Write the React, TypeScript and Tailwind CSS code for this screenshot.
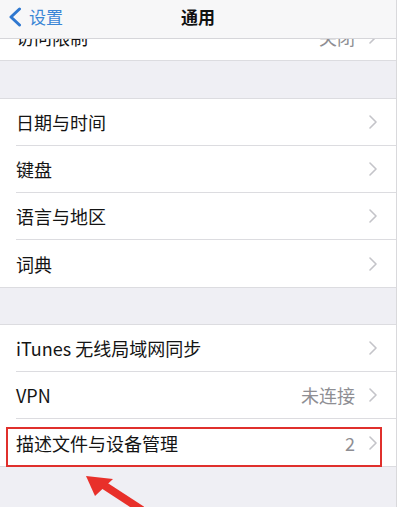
import React from 'react';

const font = { fontFamily: '"Noto Sans CJK SC", "Noto Sans", sans-serif' };

const Chevron: React.FC = () => (
  <svg width="8" height="14" viewBox="0 0 8 14" className="shrink-0">
    <path d="M1 1l6 6-6 6" fill="none" stroke="#c4c4c9" strokeWidth="1.6" strokeLinecap="round" strokeLinejoin="round" />
  </svg>
);

type RowProps = { label: string; value?: string; last?: boolean };

const Row: React.FC<RowProps> = ({ label, value, last }) => (
  <div className="bg-white pl-4">
    <div className={`h-[47px] flex items-center pr-[19px] ${last ? '' : 'border-b border-[#dcdce0]'}`}>
      <span className="flex-1 text-[18px] text-[#141414] leading-none">{label}</span>
      {value && <span className="text-[18px] text-[#8e8e93] mr-[14px] leading-none">{value}</span>}
      <Chevron />
    </div>
  </div>
);

const App: React.FC = () => {
  return (
    <div className="w-[400px] h-[507px] overflow-hidden flex bg-white" style={font}>
      <div className="flex-1 bg-[#efeff4] border-r border-[#d9d9dc] relative">
        {/* nav bar */}
        <div className="h-[39px] bg-[#f7f7f8] border-b border-[#d6d6da] flex items-center pb-[5px] relative">
          <div className="flex items-center pl-[8px] gap-[7px]">
            <svg width="14" height="20" viewBox="0 0 14 20">
              <path d="M11.5 2L3 10l8.5 8" fill="none" stroke="#2f78d0" strokeWidth="3" strokeLinecap="round" strokeLinejoin="round" />
            </svg>
            <span className="text-[17px] text-[#3a86d6] leading-none">设置</span>
          </div>
          <span className="absolute left-1/2 -translate-x-1/2 text-[17px] font-semibold text-[#111] leading-none">通用</span>
        </div>

        {/* row cut off by the nav bar */}
        <div className="h-[22px] overflow-hidden flex flex-col justify-end bg-white border-b border-[#dcdce0]">
          <div className="h-[47px] shrink-0 flex items-center pl-4 pr-[19px]">
            <span className="flex-1 text-[18px] text-[#141414] leading-none">访问限制</span>
            <span className="text-[18px] text-[#8e8e93] mr-[14px] leading-none">关闭</span>
            <Chevron />
          </div>
        </div>

        <div className="h-[37px]" />
        <div className="border-y border-[#dcdce0]">
          <Row label="日期与时间" />
          <Row label="键盘" />
          <Row label="语言与地区" />
          <Row label="词典" last />
        </div>

        <div className="h-[36px]" />
        <div className="border-y border-[#dcdce0]">
          <Row label="iTunes 无线局域网同步" />
          <Row label="VPN" value="未连接" />
          <div className="relative">
            <Row label="描述文件与设备管理" value="2" last />
            <div className="absolute left-[6px] top-[8px] w-[376px] h-[40px] border-2 border-[#e0302c]" />
          </div>
        </div>

        {/* red arrow */}
        <svg className="absolute left-[80px] top-[470px]" width="80" height="40" viewBox="0 0 80 40">
          <path d="M62 40L22 14" stroke="#e8302a" strokeWidth="8" strokeLinecap="butt" />
          <path d="M6 6L33 9L15 26Z" fill="#e8302a" />
        </svg>
      </div>
      <div className="w-[3px] bg-white" />
    </div>
  );
};

export default App;
